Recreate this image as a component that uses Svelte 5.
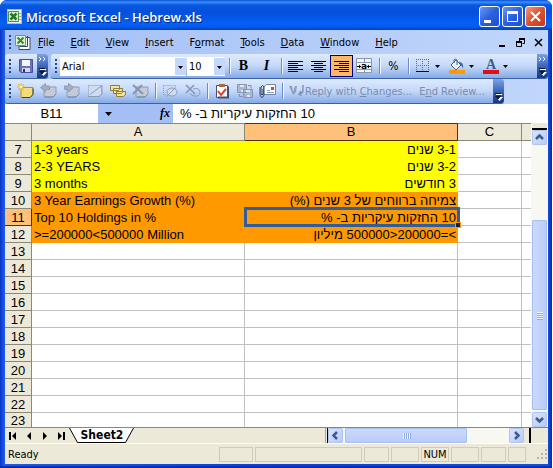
<script lang="ts">
  const menus = ['File', 'Edit', 'View', 'Insert', 'Format', 'Tools', 'Data', 'Window', 'Help'];
  // index of the underlined access key in each menu name
  const keys = [0, 0, 0, 0, 1, 0, 0, 0, 0];

  const rows = [
    { n: 7, a: '1-3 years', b: '3-1 שנים', fill: 'yellow' },
    { n: 8, a: '2-3 YEARS', b: '3-2 שנים', fill: 'yellow' },
    { n: 9, a: '3 months', b: '3 חודשים', fill: 'yellow' },
    { n: 10, a: '3 Year Earnings Growth (%)', b: 'צמיחה ברווחים של 3 שנים (%)', fill: 'orange' },
    { n: 11, a: 'Top 10 Holdings in %', b: '10 החזקות עיקריות ב- %', fill: 'orange' },
    { n: 12, a: '>=200000<500000 Million', b: '>=200000<500000 מיליון', fill: 'orange' },
    ...Array.from({ length: 11 }, (_, i) => ({ n: 13 + i, a: '', b: '', fill: '' })),
  ];

  const active = 11;
  let font = $state('Arial');
  let size = $state('10');
  let cellRef = $state('B11');
  let formula = $state('10 החזקות עיקריות ב- %');
</script>

{#snippet note(x: number, y: number)}
  <path d="M{x} {y}h12v7l-3 3h-9z" fill="#c4cbd8" stroke="#8d9bb5" />
  <path d="M{x + 1} {y + 10}h8l3 -3" fill="none" stroke="#7485a5" />
{/snippet}

{#snippet cap(double = false)}
  <button class="cap" aria-label="Toolbar options">
    <svg width="11" height="22" viewBox="0 0 11 22">
      {#if double}
        <path d="M2 2l2 2l-2 2M6 2l2 2l-2 2" fill="none" stroke="#fff" />
      {/if}
      <path d="M3 14.5h6" stroke="#fff" />
      <path d="M3 17h7l-3.5 4z" fill="#fff" />
      <path d="M2 13.5h6M2.5 16h5l-2.5 3z" fill="#101830" stroke="#101830" />
    </svg>
  </button>
{/snippet}

{#snippet drop()}
  <svg width="7" height="16"><path d="M1 7h5l-2.5 3z" /></svg>
{/snippet}

{#snippet arrow(d: string)}
  <svg width="15" height="15" viewBox="0 0 15 15"><path {d} fill="none" stroke="#40598f" stroke-width="2.5" /></svg>
{/snippet}

<div class="window">
  <header class="title">
    <svg width="15" height="15" viewBox="0 0 15 15">
      <rect x="0.5" y="0.5" width="14" height="14" fill="#eef6e6" stroke="#a9c498" />
      <path d="M11 4.5h3M11 7.5h3M11 10.5h3" stroke="#8cae7c" />
      <path d="M1.5 2.5h10v10h-10z" fill="#dcefd0" stroke="#4f8f4a" />
      <path d="M3.5 4.5l6 6M9.5 4.5l-6 6" stroke="#1f7a2a" stroke-width="2.5" />
    </svg>
    <h1>Microsoft Excel - Hebrew.xls</h1>
    <div class="caption">
      <button aria-label="Minimize"><svg width="19" height="19"><path d="M4 14.5h7" stroke="#fff" stroke-width="3" /></svg></button>
      <button aria-label="Maximize"><svg width="19" height="19"><path d="M4.5 5.5h10v9h-10z" fill="none" stroke="#fff" /><path d="M4 5.5h11" stroke="#fff" stroke-width="3" /></svg></button>
      <button class="close" aria-label="Close"><svg width="19" height="19"><path d="M5 5l9 9M14 5l-9 9" stroke="#fff" stroke-width="2" /></svg></button>
    </div>
  </header>

  <nav class="menubar">
    <span class="grip"></span>
    <svg class="doc" width="18" height="16" viewBox="0 0 18 16">
      <path d="M5 3.5h11v12h-11z" fill="#fff" stroke="#34496f" />
      <path d="M13.5 2v10.5h-8" fill="none" stroke="#34496f" />
      <path d="M1.5 1.5h10v10h-10z" fill="#e4f3d8" stroke="#6d9f5b" />
      <path d="M3.5 3.5l6 6M9.5 3.5l-6 6" stroke="#2f8a35" stroke-width="2" />
    </svg>
    {#each menus as m, i}
      <button class="menu">{m.slice(0, keys[i])}<u>{m[keys[i]]}</u>{m.slice(keys[i] + 1)}</button>
    {/each}
    <div class="doc-controls">
      <button aria-label="Minimize workbook"><svg width="9" height="9"><path d="M1 8h6" stroke="#000" stroke-width="2" /></svg></button>
      <button aria-label="Restore workbook"><svg width="9" height="9"><path d="M3 1h6M0 4h6" stroke="#000" stroke-width="2" /><path d="M3.5 1v3M8.5 1v4.5h-2M0.5 3v5.5h5v-5" fill="none" stroke="#000" /></svg></button>
      <button aria-label="Close workbook"><svg width="9" height="9"><path d="M1 1l7 7M8 1l-7 7" stroke="#000" stroke-width="1.5" /></svg></button>
    </div>
  </nav>

  <div class="dock">
    <div class="bar">
      <span class="grip"></span>
      <button class="tool" aria-label="Save">
        <svg width="16" height="16" viewBox="0 0 16 16">
          <path d="M1.5 1.5h13v13h-11.5l-1.5-1.5z" fill="#6a72c0" stroke="#454e98" />
          <rect x="4" y="2" width="8" height="6" fill="#f4f7ff" />
          <rect x="4" y="10" width="8" height="4" fill="#d4d9f0" />
          <rect x="5" y="11" width="2" height="3" fill="#2b326e" />
        </svg>
      </button>
      {@render cap(true)}
    </div>
    <div class="bar grow">
      <span class="grip"></span>
      <label class="combo font">
        <select bind:value={font} aria-label="Font"><option>Arial</option></select>
        <svg width="11" height="17"><path d="M3 8h5l-2.5 3z" /></svg>
      </label>
      <label class="combo size">
        <select bind:value={size} aria-label="Font size"><option>10</option></select>
        <svg width="11" height="17"><path d="M3 8h5l-2.5 3z" /></svg>
      </label>
      <i class="sep"></i>
      <button class="tool letter">B</button>
      <button class="tool letter slant">I</button>
      <i class="sep"></i>
      <button class="tool" aria-label="Align left"><svg width="15" height="13"><path d="M0 1.5h15M0 3.5h10M0 5.5h15M0 7.5h10M0 9.5h15M0 11.5h10" stroke="#000" /></svg></button>
      <button class="tool" aria-label="Center"><svg width="15" height="13"><path d="M0 1.5h15M3 3.5h9M0 5.5h15M3 7.5h9M0 9.5h15M3 11.5h9" stroke="#000" /></svg></button>
      <button class="tool on" aria-label="Align right"><svg width="15" height="13"><path d="M0 1.5h15M5 3.5h10M0 5.5h15M5 7.5h10M0 9.5h15M5 11.5h10" stroke="#000" /></svg></button>
      <button class="tool" aria-label="Merge and center">
        <svg width="17" height="16" viewBox="0 0 17 16">
          <path d="M0.5 0.5h15v14h-15zM0 4.5h16M0 11.5h16M8.5 0v4M8.5 12v3" fill="#f4f7fc" stroke="#8a97ae" />
          <path d="M1 8.5h4M11 8.5h4" stroke="#000" />
          <path d="M3 6.5l2 2l-2 2zM13 6.5l-2 2l2 2z" />
          <text x="5" y="11" class="tiny">a</text>
        </svg>
      </button>
      <i class="sep"></i>
      <button class="tool percent">%</button>
      <i class="sep"></i>
      <button class="tool split" aria-label="Borders">
        <svg width="16" height="16"><path d="M1 1.5h13M1 7.5h13M1.5 1v13M7.5 1v13M13.5 1v13" stroke="#5d6d8c" stroke-dasharray="1 1" /><path d="M1 13.5h13" stroke="#000" /></svg>
        {@render drop()}
      </button>
      <button class="tool split" aria-label="Fill color">
        <svg width="16" height="17" viewBox="0 0 16 17">
          <path d="M2 7l5-5l5 5l-5 5z" fill="#eaf1fb" stroke="#4d6389" />
          <path d="M5 5v-3q1-2 3 0v5" fill="none" stroke="#4d6389" />
          <path d="M10 4q5 0 4 7q-1-4-3-4z" fill="#355f9f" />
          <rect y="12" width="16" height="4" fill="#ff9900" />
        </svg>
        {@render drop()}
      </button>
      <button class="tool split" aria-label="Font color">
        <svg width="16" height="17" viewBox="0 0 16 17">
          <text x="3" y="11" class="big">A</text>
          <rect y="12" width="16" height="4" fill="#e01010" />
        </svg>
        {@render drop()}
      </button>
      <span class="space"></span>
      {@render cap(true)}
    </div>
  </div>

  <div class="dock">
    <div class="bar">
      <span class="grip"></span>
      <button class="tool" aria-label="New comment">
        <svg width="18" height="16" viewBox="0 0 18 16">
          <path d="M4 4.5h12v7l-3 3h-9z" fill="#f3dc78" stroke="#a8923f" />
          <path d="M5 14.5h8l3-3v-6" fill="none" stroke="#39424f" />
          <path d="M4 0v8M0 4h8M1 1l6 6M7 1l-6 6" stroke="#e8b020" />
          <circle cx="4" cy="4" r="1.5" fill="#fff6a8" />
        </svg>
      </button>
      <button class="tool" aria-label="Previous comment" disabled>
        <svg width="18" height="16" viewBox="0 0 18 16">{@render note(4, 4)}<path d="M0.5 4.5l5-4v2.5h4v3.5h-4v2.5z" fill="#a3afc8" stroke="#8f9cb8" /></svg>
      </button>
      <button class="tool" aria-label="Next comment" disabled>
        <svg width="18" height="16" viewBox="0 0 18 16">{@render note(4, 4)}<path d="M10.5 4.5l-5-4v2.5h-4v3.5h4v2.5z" fill="#a3afc8" stroke="#8f9cb8" /></svg>
      </button>
      <button class="tool" aria-label="Show comment" disabled>
        <svg width="18" height="16" viewBox="0 0 18 16"><path d="M2.5 2.5h13v9l-2 2h-11z" fill="#cfdcf2" stroke="#8d9bb5" stroke-dasharray="1 1" /><path d="M2 13.5h11l3-3v-8l-12 9" fill="none" stroke="#8d9bb5" /></svg>
      </button>
      <button class="tool" aria-label="Show all comments">
        <svg width="18" height="16" viewBox="0 0 18 16">
          <path d="M1.5 2.5h9v4l-1 1h-8zM4.5 5.5h9v4l-1 1h-8zM7.5 8.5h9v3l-2 2h-7z" fill="#f6e596" stroke="#8f7d40" />
        </svg>
      </button>
      <button class="tool" aria-label="Delete comment" disabled>
        <svg width="18" height="16" viewBox="0 0 18 16">{@render note(4, 4)}<path d="M1 2l10 9M10 2l-9 9" stroke="#8795b2" stroke-width="2" /></svg>
      </button>
      <i class="sep"></i>
      <button class="tool" aria-label="Show ink" disabled>
        <svg width="18" height="16" viewBox="0 0 18 16"><path d="M2.5 2.5h12v3M2.5 3v9h3" fill="none" stroke="#8d9bb5" stroke-dasharray="1 1" /><ellipse cx="11" cy="9" rx="5" ry="4" fill="#cfdcf2" stroke="#8d9bb5" /><path d="M5 14l8-8" stroke="#8d9bb5" /></svg>
      </button>
      <button class="tool" aria-label="Delete ink" disabled>
        <svg width="18" height="16" viewBox="0 0 18 16"><path d="M2 2l9 9M10 2l-8 8" stroke="#8795b2" stroke-width="1.5" /><path d="M9 6q6-2 7 3q0 5-6 4q-4-1-4-3" fill="none" stroke="#8d9bb5" /></svg>
      </button>
      <i class="sep"></i>
      <button class="tool" aria-label="Create task">
        <svg width="16" height="16" viewBox="0 0 16 16">
          <path d="M2.5 2.5h11v12h-11z" fill="#fff" stroke="#44516e" />
          <path d="M4 14.5h10v-11" fill="none" stroke="#44516e" stroke-width="2" />
          <rect x="5" y="1" width="6" height="3" fill="#b0683a" />
          <path d="M4 8l3 4l5-6" fill="none" stroke="#e0402c" stroke-width="2" />
        </svg>
      </button>
      <button class="tool" aria-label="Update file" disabled>
        <svg width="18" height="16" viewBox="0 0 18 16"><path d="M1.5 1.5h9v8h-9zM7.5 6.5h9v8h-9z" fill="#a9b7d3" stroke="#8795b2" /><path d="M4 3h4M10 8h4M5 8h2M11 13h3" stroke="#e4ebf8" stroke-width="2" /><path d="M12 2.5h3v3M3.5 11v2.5h3" fill="none" stroke="#7f8eac" /></svg>
      </button>
      <button class="tool" aria-label="Send as attachment">
        <svg width="19" height="16" viewBox="0 0 19 16">
          <path d="M5.5 4.5l3-3h9v10h-12z" fill="#fff" stroke="#7284a8" />
          <rect x="13" y="4" width="3" height="3" fill="#d8433c" />
          <path d="M9 9.5h7M9 7.5h3" stroke="#7ea0d8" />
          <path d="M2 4v8q2 5 4 0v-8q-1-3-3 0v7q1 2 2 0v-5" fill="none" stroke="#33466c" />
        </svg>
      </button>
      <i class="sep"></i>
      <button class="tool word" disabled>
        <svg width="17" height="14" viewBox="0 0 17 14"><path d="M1 2h3l1 6l2-6h2l-1 6l-3 3z" fill="#8f9db9" /><path d="M15 1v6q-1 3-4 3l2-3M10.5 10l3 2" fill="none" stroke="#8795b2" stroke-width="1.5" /></svg>
        <span>Reply with <u>C</u>hanges...</span>
      </button>
      <button class="tool word" disabled><span>E<u>n</u>d Review...</span></button>
      {@render cap()}
    </div>
  </div>

  <div class="formula">
    <input class="name" bind:value={cellRef} aria-label="Name box" />
    <button class="drop" aria-label="Named ranges"><svg width="7" height="4"><path d="M0 0h7l-3.5 4z" /></svg></button>
    <button class="fx" aria-label="Insert function">fx</button>
    <input class="entry" dir="rtl" bind:value={formula} aria-label="Formula" />
  </div>

  <main class="sheet">
    <div class="cells">
      <table>
        <colgroup><col class="c-head" /><col class="c-wide" /><col class="c-wide" /><col class="c-thin" /><col /></colgroup>
        <thead>
          <tr><th></th><th>A</th><th class="hot">B</th><th>C</th><th></th></tr>
        </thead>
        <tbody>
          {#each rows as r}
            <tr class={r.fill}>
              <th class:hot={r.n === active}>{r.n}</th>
              <td>{r.a}</td>
              <td dir="rtl" class:active={r.n === active}>{r.b}</td>
              <td></td>
              <td></td>
            </tr>
          {/each}
        </tbody>
      </table>
    </div>
    <div class="vscroll">
      <span class="split-box"></span>
      <button class="sb" aria-label="Scroll up">{@render arrow('M4 9l3.5-3.5l3.5 3.5')}</button>
      <div class="vtrack"><span class="thumb"><i></i><i></i><i></i><i></i></span></div>
      <button class="sb" aria-label="Scroll down">{@render arrow('M4 6l3.5 3.5l3.5-3.5')}</button>
    </div>
  </main>

  <div class="tabs">
    <button aria-label="First sheet"><svg width="8" height="8"><path d="M1 0v8" stroke="#000" stroke-width="2" /><path d="M7 0v8l-4-4z" /></svg></button>
    <button aria-label="Previous sheet"><svg width="8" height="8"><path d="M6 0v8l-4-4z" /></svg></button>
    <button aria-label="Next sheet"><svg width="8" height="8"><path d="M2 0v8l4-4z" /></svg></button>
    <button aria-label="Last sheet"><svg width="8" height="8"><path d="M7 0v8" stroke="#000" stroke-width="2" /><path d="M1 0v8l4-4z" /></svg></button>
    <button class="tab">
      <svg viewBox="0 0 66 15" preserveAspectRatio="none"><path d="M0.5 0l8 14.5h48l8-14.5" fill="#fff" stroke="#000" /></svg>
      <span>Sheet2</span>
    </button>
    <div class="hscroll">
      <span class="bar-split"></span>
      <button class="sb" aria-label="Scroll left">{@render arrow('M9 4l-3.5 3.5l3.5 3.5')}</button>
      <div class="htrack"><span class="thumb"><i></i><i></i><i></i><i></i></span></div>
      <button class="sb" aria-label="Scroll right">{@render arrow('M6 4l3.5 3.5l-3.5 3.5')}</button>
      <span class="end"></span>
    </div>
  </div>

  <footer class="status">
    <span class="ready">Ready</span>
    <span class="pane w34"></span>
    <span class="pane fill"></span>
    <span class="pane w25"></span>
    <span class="pane w28"></span>
    <span class="pane w28">NUM</span>
    <span class="pane w28"></span>
    <span class="pane w25"></span>
    <span class="pane w18"></span>
    <svg width="20" height="12" viewBox="0 0 20 12"><path d="M17 1h2v2h-2zM17 5h2v2h-2zM17 9h2v2h-2zM13 5h2v2h-2zM13 9h2v2h-2zM9 9h2v2h-2z" fill="#b8b4a2" /></svg>
  </footer>
</div>

<style>
  :global(body) { background: #fff; }

  .window {
    box-sizing: border-box;
    height: 100vh;
    margin-right: 1px;
    padding: 0 4px 4px 5px;
    display: flex;
    flex-direction: column;
    background: linear-gradient(to right, #0a34c8, #1c5ae8 4px, #0a3fd8 50%, #1450e0 calc(100% - 4px), #0828a8);
    box-shadow: inset 0 -2px #0a2fb4;
    border-radius: 7px 7px 0 0;
    font-family: "DejaVu Sans Condensed", "Noto Sans", sans-serif;
    font-size: 11px;
    color: #000;
    overflow: hidden;
  }

  button, input, select {
    font: inherit;
    color: inherit;
    padding: 0;
    margin: 0;
    border: 0;
    background: none;
    border-radius: 0;
    outline: none;
  }
  svg { display: block; flex: none; }

  .title {
    flex: none;
    height: 30px;
    margin: 0 -4px 0 -5px;
    padding: 3px 6px 0 7px;
    box-sizing: border-box;
    display: flex;
    align-items: center;
    gap: 4px;
    background: linear-gradient(#0a4cd0, #3a90ff 2px, #0858e0 5px, #0450dc 12px, #0460f8 24px, #0458ec 27px, #0340c0);
  }
  h1 {
    flex: 1;
    margin: 0;
    font: 600 13px "Open Sans", sans-serif;
    color: #fff;
    text-shadow: 1px 1px #0a2a80;
    white-space: nowrap;
  }
  .caption { display: flex; gap: 2px; }
  .caption button {
    width: 21px;
    height: 21px;
    box-sizing: border-box;
    border: 1px solid #fff;
    border-radius: 3px;
    background: linear-gradient(135deg, #6a98f4, #2a60e0 50%, #1c4fd0);
  }
  .caption .close { background: linear-gradient(135deg, #f09a80, #dc5030 50%, #c43c18); }

  .menubar {
    flex: none;
    height: 24px;
    padding: 0 5px 0 3px;
    display: flex;
    align-items: center;
    background: linear-gradient(to right, #a3bff5, #c0d6fb);
  }
  .doc { margin-right: 6px; }
  .menu { margin-right: 16px; }
  .grip {
    flex: none;
    width: 2px;
    height: 14px;
    margin: 0 3px 0 1px;
    background: repeating-linear-gradient(#2a4580 0 2px, transparent 2px 4px);
  }
  .doc-controls { margin-left: auto; display: flex; gap: 9px; }

  .dock {
    flex: none;
    height: 25px;
    display: flex;
    gap: 3px;
    background: linear-gradient(to right, #a3bff5, #c0d6fb);
  }
  .bar {
    height: 24px;
    padding-left: 3px;
    display: flex;
    align-items: center;
    border-bottom: 1px solid #3b62a8;
    border-radius: 3px;
    background: linear-gradient(#dfeafd, #c3d8fa 50%, #86aae6);
  }
  .grow { flex: 1; min-width: 0; }
  .space { flex: 1; }
  .tool {
    flex: none;
    width: 23px;
    height: 22px;
    display: flex;
    align-items: center;
    justify-content: center;
  }
  .on {
    box-sizing: border-box;
    border: 1px solid #000080;
    background: #fdb76c;
  }
  .letter { font: bold 14px "Liberation Serif", serif; }
  .slant { font-style: italic; }
  .percent { font-size: 12px; }
  .split { width: 34px; gap: 3px; }
  .word { width: auto; padding: 0 4px 0 3px; color: #7c8bab; white-space: nowrap; }
  .sep { flex: none; width: 1px; height: 16px; margin: 0 2px 0 3px; background: #6a8ccb; box-shadow: 1px 0 #f1f6ff; }
  .tiny { font: bold 9px "DejaVu Sans", sans-serif; }
  .big { font: bold 14px "Liberation Serif", serif; fill: #3c5a94; }
  .cap {
    flex: none;
    width: 11px;
    height: 24px;
    border-radius: 0 3px 3px 0;
    background: linear-gradient(#7ba2e7, #3c66b8 50%, #14387f);
  }
  .word + .cap { margin-left: 4px; }

  .combo {
    height: 19px;
    display: flex;
    align-items: center;
    background: #fff;
    margin-right: 1px;
  }
  .combo select { flex: 1; min-width: 0; height: 19px; padding-left: 2px; appearance: none; }
  .combo svg { background: #c3d8fa; }
  .font { width: 126px; }
  .size { width: 38px; }

  .formula {
    flex: none;
    height: 19px;
    display: flex;
    background: #a3bff5;
    font: 13px "Liberation Sans", Arial, sans-serif;
  }
  .name { width: 93px; background: #fff; text-align: center; }
  .drop { width: 20px; display: flex; align-items: center; justify-content: center; }
  .fx { width: 55px; text-align: right; font: italic bold 12px "Liberation Serif", serif; padding-right: 3px; }
  .entry { flex: 1; min-width: 0; background: #fff; padding-left: 7px; text-align: left; }

  .sheet { flex: 1 1 0; min-height: 0; display: flex; background: #fff; }
  .cells { flex: 1; min-width: 0; overflow: hidden; }
  table {
    width: 100%;
    table-layout: fixed;
    border-collapse: separate;
    border-spacing: 0;
    font: 13px "Liberation Sans", Arial, sans-serif;
  }
  .c-head { width: 27px; }
  .c-wide { width: 213px; }
  .c-thin { width: 64px; }
  th, td {
    box-sizing: border-box;
    height: 17px;
    padding: 1px 2px 0;
    line-height: 15px;
    white-space: nowrap;
    border-right: 1px solid #c0c0c0;
    border-bottom: 1px solid #c0c0c0;
  }
  th {
    padding: 1px 0 0;
    font-weight: normal;
    background: #ece9d8;
    border-color: #8c8874;
  }
  thead th { height: 18px; padding: 0; line-height: 16px; border-top: 1px solid #8c8874; }
  th.hot { background: #ffc07a; border-color: #4a3418; }
  td[dir] { text-align: right; }
  td:last-child, th:last-child { border-right: 0; }
  tbody tr:last-child > * { height: 14px; padding-top: 0; line-height: 13px; border-bottom: 0; }
  .yellow td:nth-child(-n + 3) { background: #ff0; border-color: #ff0; }
  .orange td:nth-child(-n + 3) { background: #f90; border-color: #f90; }
  .active { position: relative; }
  .active::before {
    content: '';
    position: absolute;
    inset: -2px;
    border: 3px solid #2f5d9e;
  }
  .active::after {
    content: '';
    position: absolute;
    right: -3px;
    bottom: -3px;
    width: 4px;
    height: 4px;
    background: #10204c;
    border: 1px solid #f90;
  }

  .vscroll {
    width: 17px;
    box-sizing: border-box;
    padding: 0 1px;
    display: flex;
    flex-direction: column;
    background: #f8f8f3;
  }
  .split-box { height: 7px; box-sizing: border-box; background: #ece9d8; border-bottom: 2px solid #000; }
  .sb {
    flex: none;
    width: 15px;
    height: 15px;
    border-radius: 2px;
    background: linear-gradient(135deg, #dbe6fe, #b4c9f8);
    box-shadow: inset 0 0 0 1px #b0c4f0;
  }
  .vtrack { flex: 1; display: flex; flex-direction: column; padding: 75px 0 2px; }
  .thumb {
    flex: 1;
    display: flex;
    align-items: center;
    justify-content: center;
    gap: 1px;
    border-radius: 2px;
    background: linear-gradient(#cbdafd, #b9cbf8);
    box-shadow: inset 0 0 0 1px #a9bff0;
  }
  .thumb i { width: 1px; height: 6px; background: #eef4fe; box-shadow: 1px 0 #8cabe8; }
  .vtrack .thumb { flex-direction: column; background: linear-gradient(to right, #cbdafd, #b9cbf8); }
  .vtrack i { width: 6px; height: 1px; box-shadow: 0 1px #8cabe8; }

  .tabs {
    flex: none;
    height: 15px;
    display: flex;
    align-items: stretch;
    background: #ece9d8;
    border-top: 1px solid #8c8874;
  }
  .tabs > button:not(.tab) { width: 16px; display: flex; align-items: center; justify-content: center; }
  .tab { display: grid; font-weight: bold; font-size: 12px; }
  .tab > * { grid-area: 1 / 1; }
  .tab svg { width: 100%; height: 15px; }
  .tab span { padding: 0 10px; line-height: 14px; }
  .hscroll { width: 41%; margin-left: auto; display: flex; align-items: center; background: #f8f8f3; }
  .htrack { flex: 1; display: flex; align-self: stretch; padding: 0 42px 0 2px; }
  .bar-split {
    width: 3px;
    align-self: stretch;
    box-sizing: border-box;
    background: #ece9d8;
    border-right: 1px solid #000;
    border-left: 1px solid #aca899;
  }
  .end { width: 24px; align-self: stretch; background: linear-gradient(to right, #ece9d8 5px, #000 5px 7px, #ece9d8 7px); }

  .status {
    flex: none;
    height: 21px;
    display: flex;
    align-items: center;
    gap: 2px;
    background: #ece9d8;
    border-top: 1px solid #fff;
    box-sizing: border-box;
  }
  .ready { width: 212px; padding-left: 3px; box-sizing: border-box; }
  .pane { box-sizing: border-box; height: 15px; line-height: 14px; text-align: center; border: 1px solid #d0ccb8; }
  .fill { flex: 1; }
  .w34 { width: 34px; }
  .w28 { width: 28px; }
  .w25 { width: 25px; }
  .w18 { width: 18px; }
</style>
